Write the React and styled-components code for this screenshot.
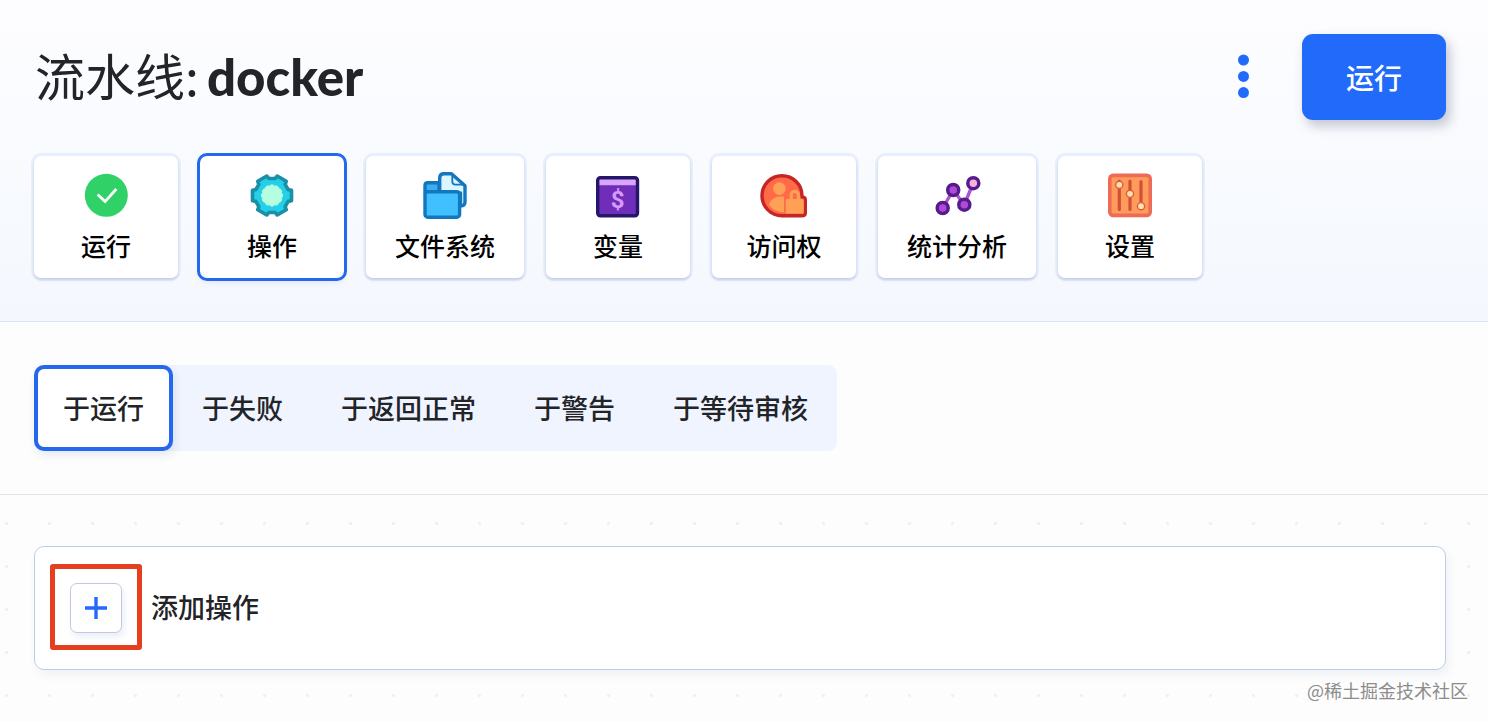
import React, { useState } from "react";
import styled, { createGlobalStyle } from "styled-components";

const GlobalStyle = createGlobalStyle`
  * { box-sizing: border-box; }
  body {
    margin: 0;
    background: #fdfdfd;
    color: #222428;
    font-family: "Noto Sans CJK SC", Lato, sans-serif;
  }
  button { font-family: inherit; color: inherit; cursor: pointer; }
`;

const Page = styled.div`
  position: relative;
  min-height: 100vh;
  display: flex;
  flex-direction: column;
`;

const Header = styled.header`
  padding: 34px 42px 43px 34px;
  background: linear-gradient(#fdfdff, #f4f8fe);
  border-bottom: 1px solid #dbe6f5;
`;

const TitleRow = styled.div`
  display: flex;
  align-items: center;
  height: 86px;
`;

const Title = styled.h1`
  display: flex;
  align-items: baseline;
  gap: 8px;
  margin: 0;
  padding: 0 0 4px 1px;
  flex: 1;
  font-size: 50px;
  line-height: 60px;
  font-weight: 400;
`;

const PipelineName = styled.strong`
  font-family: Lato, "Noto Sans CJK SC", sans-serif;
  font-size: 51px;
  font-weight: 900;
`;

const MenuButton = styled.button`
  display: flex;
  padding: 0;
  margin-right: 52px;
  border: 0;
  background: none;
`;

const RunButton = styled.button`
  width: 144px;
  height: 86px;
  border: 0;
  border-radius: 11px;
  background: #226bfa;
  && { color: #fff; }
  font-size: 28px;
  font-weight: 500;
  box-shadow: 4px 6px 12px rgba(50, 60, 90, 0.28);
`;

const CardNav = styled.nav`
  display: flex;
  flex-wrap: wrap;
  gap: 22px;
  margin-top: 36px;
`;

const Card = styled.button`
  display: flex;
  flex-direction: column;
  align-items: center;
  gap: 11px;
  min-width: 144px;
  padding: 15px 29px 18px;
  border: 0;
  border-radius: 7px;
  background: #fff;
  && { color: #000; }
  font-size: 25px;
  line-height: 30px;
  font-weight: 500;
  box-shadow: ${(p) =>
    p.$active
      ? "0 0 0 3px #2468ee, 0 4px 6px rgba(60, 70, 140, 0.12)"
      : "0 2px 3px rgba(70, 60, 140, 0.2), 0 0 0 3px #e8f0fe"};
`;

const TabSection = styled.section`
  padding: 43px 42px 43px 34px;
  border-bottom: 1px solid #dde4ea;
`;

const TabList = styled.div`
  display: inline-flex;
  vertical-align: top;
  border-radius: 9px;
  background: #f0f4ff;
`;

const Tab = styled.button`
  height: 86px;
  padding: 0 25px 2px;
  border: 4px solid ${(p) => (p.$active ? "#2468ee" : "transparent")};
  border-radius: 10px;
  background: ${(p) => (p.$active ? "#fff" : "none")};
  box-shadow: ${(p) => (p.$active ? "2px 4px 8px rgba(60, 80, 140, 0.12)" : "none")};
  font-size: 27px;
  font-weight: 500;
`;

const Canvas = styled.main`
  flex: 1;
  padding: 51px 42px 52px 34px;
  background-image: radial-gradient(circle, #eeeff2 1px, transparent 2px);
  background-size: 43px 43px;
  background-position: -15px 7px;
`;

const ActionPanel = styled.div`
  display: flex;
  align-items: center;
  gap: 9px;
  height: 124px;
  padding: 0 15px 2px;
  border: 1px solid #bccdec;
  border-radius: 10px;
  background: #fff;
  box-shadow: 3px 5px 10px rgba(60, 80, 130, 0.07);
`;

const Highlight = styled.div`
  display: flex;
  align-items: center;
  justify-content: center;
  width: 92px;
  height: 86px;
  padding-top: 2px;
  border: 5px solid #e5401d;
  border-radius: 3px;
`;

const AddButton = styled.button`
  display: flex;
  align-items: center;
  justify-content: center;
  width: 52px;
  height: 50px;
  padding: 0;
  border: 1px solid #c0c9e2;
  border-radius: 7px;
  background: #fff;
  box-shadow: 2px 4px 6px rgba(60, 90, 190, 0.1);
`;

const AddLabel = styled.label`
  font-size: 27px;
  line-height: 40px;
  font-weight: 500;
`;

const Watermark = styled.small`
  position: absolute;
  right: 20px;
  bottom: 19px;
  color: #8c8c8c;
  font-size: 18px;
  line-height: 26px;
  text-shadow: 0 0 1px #fff;
`;

const polar = (r, deg) => {
  const t = (deg * Math.PI) / 180;
  return `${(24 + r * Math.cos(t)).toFixed(2)},${(24.5 + r * Math.sin(t)).toFixed(2)}`;
};
const gearPoints = [0, 60, 120, 180, 240, 300]
  .flatMap((a) => [polar(20.2, a - 15), polar(20.2, a + 15), polar(17.2, a + 20), polar(17.2, a + 40)])
  .join(" ");
const corePoints = Array.from({ length: 12 }, (_, i) => i * 30)
  .flatMap((a) => [polar(10.6, a - 8), polar(10.6, a + 8), polar(9.2, a + 15)])
  .join(" ");

const Icon = ({ children }) => (
  <svg width="48" height="48" viewBox="0 0 48 48" fill="none" aria-hidden="true">
    {children}
  </svg>
);

const RunIcon = () => (
  <Icon>
    <circle cx="24.3" cy="24.3" r="21.5" fill="#30d267" />
    <path d="M15.6 23.6L23.1 30.6L34.3 18" stroke="#fff" strokeWidth="2.8" />
  </Icon>
);

const GearIcon = () => (
  <Icon>
    <polygon points={gearPoints} fill="#24cfe8" stroke="#1c8fa6" strokeWidth="3.6" strokeLinejoin="round" />
    <polygon points={corePoints} fill="#b3ffe0" stroke="#b3ffe0" strokeLinejoin="round" />
  </Icon>
);

const FilesIcon = () => (
  <Icon>
    <g stroke="#1277bf" strokeWidth="3.4" strokeLinejoin="round">
      <path d="M4 22V14.5Q4 11.8 6.8 11.8H18V22Z" fill="#3aaef0" />
      <path d="M18.7 22V7Q18.7 2.8 23 2.8H30.5L44 14.8V31Q44 35 39.5 35V22Z" fill="#dcf6ff" />
      <path d="M31.3 4V10.5Q31.3 13.6 34.5 13.6H43" strokeWidth="1.8" />
      <rect x="4" y="20.8" width="34.6" height="25.4" rx="2.8" fill="#40c0ff" />
    </g>
  </Icon>
);

const VariableIcon = () => (
  <Icon>
    <rect x="3.7" y="6.7" width="39.8" height="38" rx="2.6" fill="#6f2db9" />
    <path d="M4 7H43V14.2H4Z" fill="#d8a5fb" />
    <rect x="3.7" y="6.7" width="39.8" height="38" rx="2.6" stroke="#24176a" strokeWidth="3.4" />
    <text x="23.6" y="37" textAnchor="middle" fontFamily="Roboto, sans-serif" fontSize="24" fontWeight="700" fill="#d69af8">
      $
    </text>
  </Icon>
);

const AccessIcon = () => (
  <Icon>
    <path
      d="M22 44.7A20 20 0 1 1 42 24.7Q42 26 44 26.4Q45.3 26.8 45.3 28.5V42Q45.3 44.7 42.6 44.7Z"
      fill="#ff6b48"
      stroke="#c52525"
      strokeWidth="3.4"
    />
    <circle cx="19.4" cy="17.6" r="6.3" fill="#ffa056" />
    <path d="M8.8 33.5Q12.5 25.5 20 25.5H24V41.2Q14 41.2 8.8 33.5Z" fill="#ffa056" />
    <path d="M31.2 29V24A3.6 3.6 0 0 1 38.4 24V29" stroke="#ffa056" strokeWidth="3.2" />
    <rect x="25.8" y="28" width="18" height="14.6" rx="1.4" fill="#ffa056" />
  </Icon>
);

const StatsIcon = () => (
  <Icon>
    <path d="M9.7 37L20.2 19L31.3 33.7L40.3 12" stroke="#b052d2" strokeWidth="3.4" />
    <g fill="#b04ad6" stroke="#541c8e" strokeWidth="3.5">
      <circle cx="9.7" cy="37" r="5.5" />
      <circle cx="20.2" cy="19" r="5.5" />
      <circle cx="31.3" cy="33.7" r="5.5" />
      <circle cx="40.3" cy="12.2" r="5.5" fill="#f8b2de" />
    </g>
  </Icon>
);

const SettingsIcon = () => (
  <Icon>
    <rect x="3.8" y="4.4" width="40.4" height="40" rx="3.4" fill="#ff9c5c" stroke="#ee6c56" strokeWidth="3.6" />
    <path d="M13.3 10V38.5M24 10V38.5M35 10.5V36" stroke="#d0503a" strokeWidth="3.2" strokeLinecap="round" />
    <g fill="#ffe2ac" stroke="#dc5c40" strokeWidth="1.4">
      <circle cx="13.3" cy="13.8" r="3.6" />
      <circle cx="24" cy="22.8" r="3.6" />
      <circle cx="35" cy="35.2" r="3.6" />
    </g>
  </Icon>
);

const cards = [
  { label: "运行", Glyph: RunIcon },
  { label: "操作", Glyph: GearIcon },
  { label: "文件系统", Glyph: FilesIcon },
  { label: "变量", Glyph: VariableIcon },
  { label: "访问权", Glyph: AccessIcon },
  { label: "统计分析", Glyph: StatsIcon },
  { label: "设置", Glyph: SettingsIcon },
];

const tabs = ["于运行", "于失败", "于返回正常", "于警告", "于等待审核"];

export default function App() {
  const [card, setCard] = useState("操作");
  const [tab, setTab] = useState("于运行");

  return (
    <Page lang="zh-CN">
      <GlobalStyle />
      <Header>
        <TitleRow>
          <Title>
            流水线: <PipelineName>docker</PipelineName>
          </Title>
          <MenuButton type="button" aria-label="更多">
            <svg width="13" height="46" viewBox="0 0 13 46" fill="#226bfa" aria-hidden="true">
              <circle cx="6.5" cy="6" r="5.5" />
              <circle cx="6.5" cy="22.4" r="5.5" />
              <circle cx="6.5" cy="38.6" r="5.5" />
            </svg>
          </MenuButton>
          <RunButton type="button">运行</RunButton>
        </TitleRow>
        <CardNav>
          {cards.map(({ label, Glyph }) => (
            <Card key={label} type="button" $active={card === label} onClick={() => setCard(label)}>
              <Glyph />
              {label}
            </Card>
          ))}
        </CardNav>
      </Header>
      <TabSection>
        <TabList role="tablist">
          {tabs.map((name) => (
            <Tab
              key={name}
              type="button"
              role="tab"
              aria-selected={tab === name}
              $active={tab === name}
              onClick={() => setTab(name)}
            >
              {name}
            </Tab>
          ))}
        </TabList>
      </TabSection>
      <Canvas>
        <ActionPanel>
          <Highlight>
            <AddButton id="add-action" type="button">
              <svg width="24" height="24" viewBox="0 0 24 24" aria-hidden="true">
                <path d="M12 1V23M1 12H23" stroke="#226bfa" strokeWidth="3.4" />
              </svg>
            </AddButton>
          </Highlight>
          <AddLabel htmlFor="add-action">添加操作</AddLabel>
        </ActionPanel>
      </Canvas>
      <Watermark>@稀土掘金技术社区</Watermark>
    </Page>
  );
}
